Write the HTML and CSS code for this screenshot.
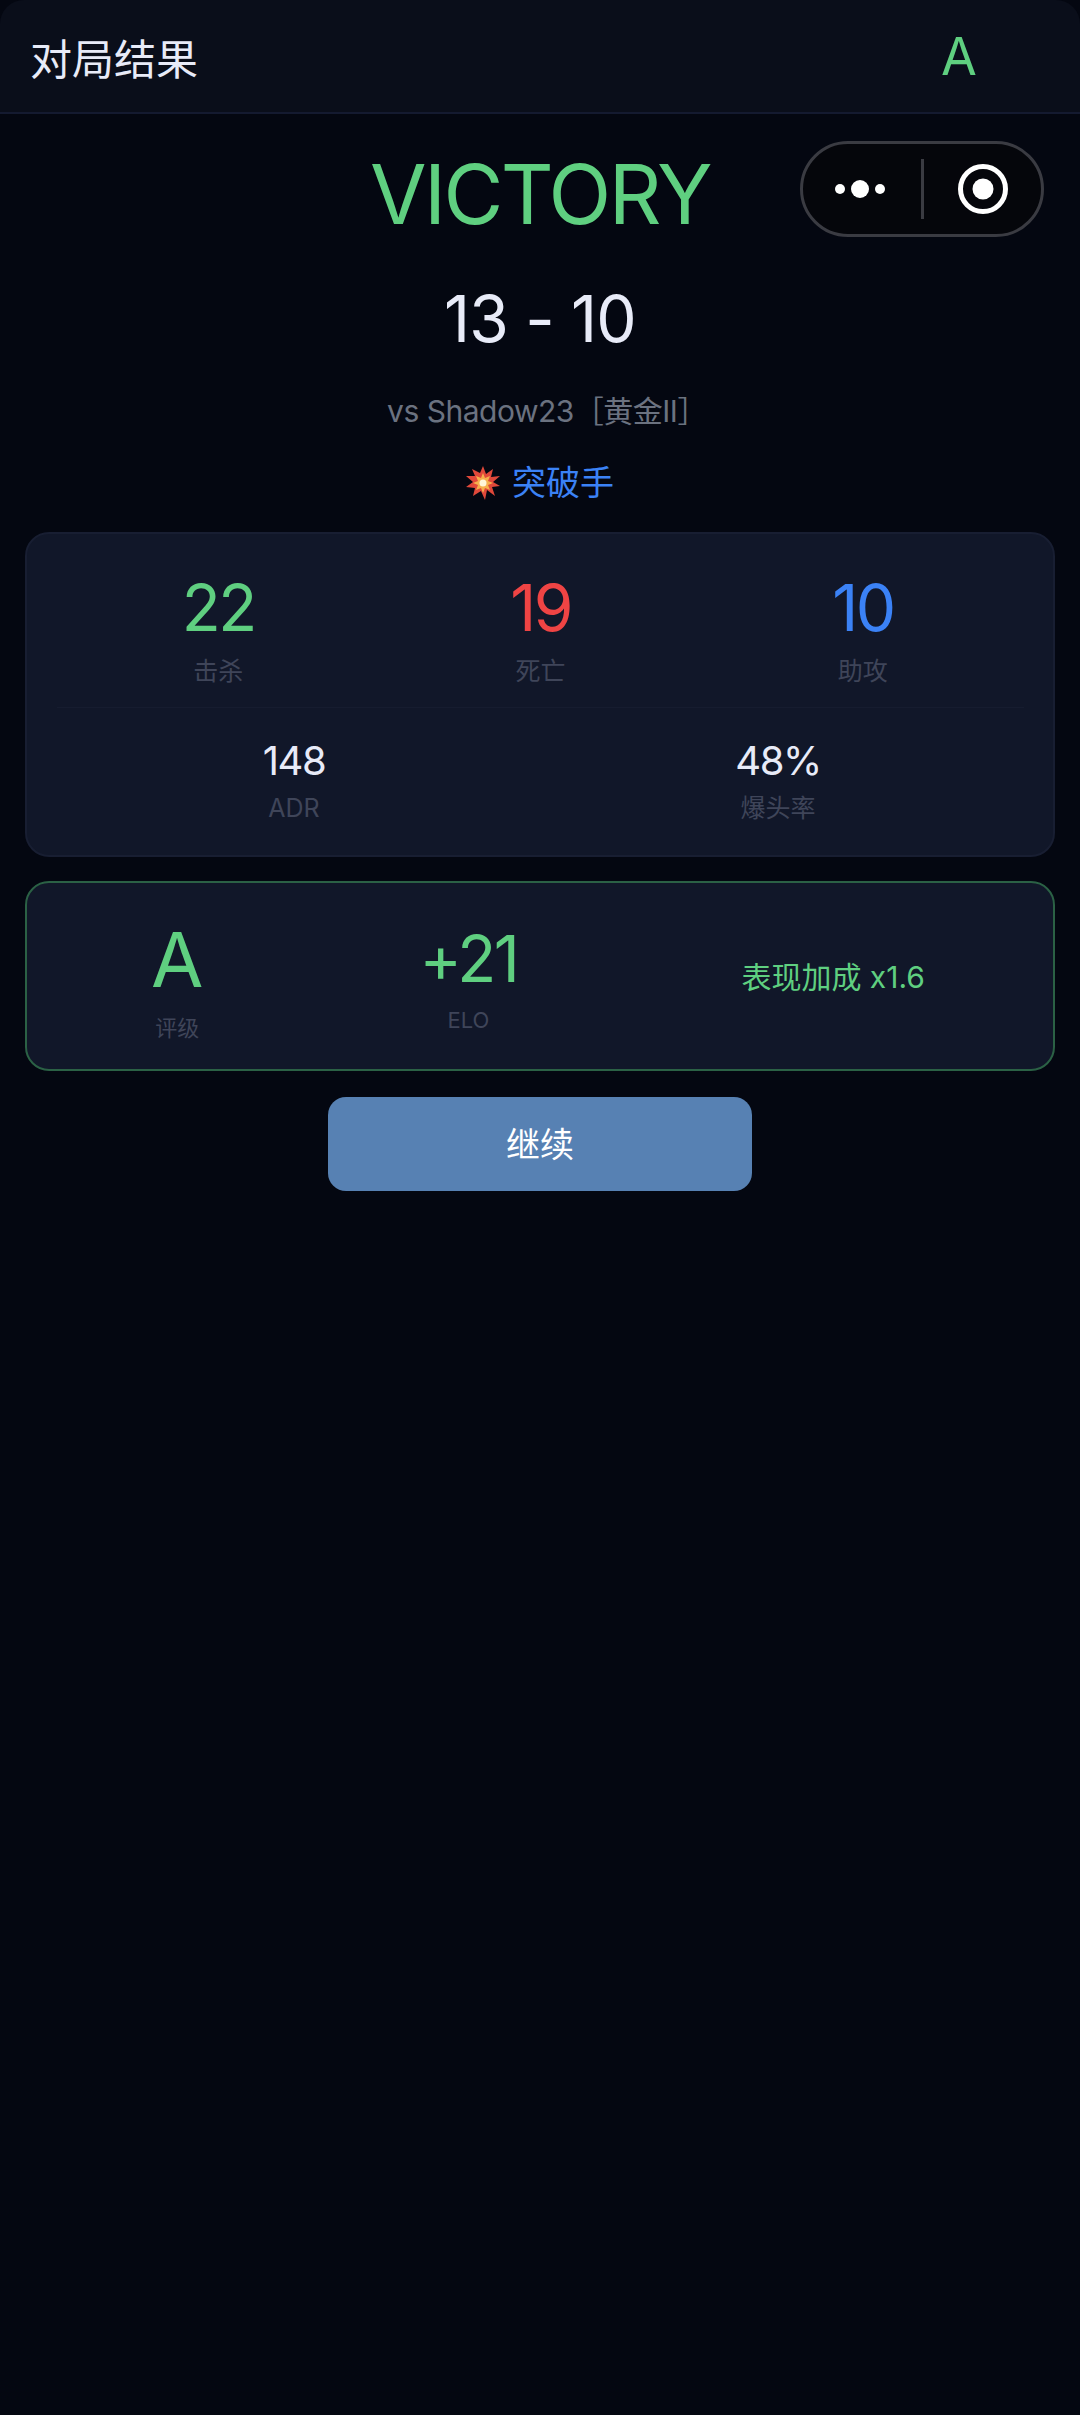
FILE: index.html
```html
<!DOCTYPE html>
<html lang="zh-CN">
<head>
  <meta charset="UTF-8">
  <title>对局结果</title>
  <link rel="stylesheet" href="styles.css">
</head>
<body>
  <div class="page">
    <header class="topbar">
      <span class="topbar-title">对局结果</span>
      <span class="topbar-grade">A</span>
    </header>

    <div class="capsule">
      <svg class="capsule-more" width="52" height="18" viewBox="0 0 52 18">
        <circle cx="6" cy="9" r="5" fill="#fff"/>
        <circle cx="26" cy="9" r="9" fill="#fff"/>
        <circle cx="46" cy="9" r="5" fill="#fff"/>
      </svg>
      <span class="capsule-line"></span>
      <svg class="capsule-close" width="50" height="50" viewBox="0 0 50 50">
        <circle cx="25" cy="25" r="22.5" fill="none" stroke="#fff" stroke-width="5"/>
        <circle cx="25" cy="25" r="10.5" fill="#fff"/>
      </svg>
    </div>

    <main class="content">
      <h1 class="result">VICTORY</h1>
      <div class="score">13 - 10</div>
      <div class="opponent">vs Shadow23［黄金II］</div>
      <div class="badge">
        <svg class="badge-icon" width="34" height="34" viewBox="0 0 34 34">
          <path d="M17 0l3 8 7-5-2 8 9-1-7 6 7 4-8 1 3 9-8-6-2 10-4-9-8 5 2-8-9-1 7-5-7-6 9 0-3-7 8 4z" fill="#e0483a"/>
          <path d="M17 7l2 5 5-2-2 5 5 2-5 2 2 5-5-2-2 5-2-5-5 2 2-5-5-2 5-2-2-5 5 2z" fill="#f6b04d"/>
          <circle cx="17" cy="17" r="3.5" fill="#fff6d8"/>
        </svg>
        <span>突破手</span>
      </div>

      <section class="card stats">
        <div class="stats-row">
          <div class="stat">
            <div class="stat-num green">22</div>
            <div class="stat-label">击杀</div>
          </div>
          <div class="stat">
            <div class="stat-num red">19</div>
            <div class="stat-label">死亡</div>
          </div>
          <div class="stat">
            <div class="stat-num blue">10</div>
            <div class="stat-label">助攻</div>
          </div>
        </div>
        <div class="stats-row stats-row-sub">
          <div class="stat">
            <div class="stat-small">148</div>
            <div class="stat-label">ADR</div>
          </div>
          <div class="stat">
            <div class="stat-small">48%</div>
            <div class="stat-label">爆头率</div>
          </div>
        </div>
      </section>

      <section class="card rating">
        <div class="stat">
          <div class="rating-grade green">A</div>
          <div class="rating-label">评级</div>
        </div>
        <div class="stat rating-elo-box">
          <div class="rating-elo green">+21</div>
          <div class="rating-label">ELO</div>
        </div>
        <div class="rating-bonus green">表现加成 x1.6</div>
      </section>

      <button class="next-btn">继续</button>
    </main>
  </div>
</body>
</html>
```

FILE: styles.css
```css
* {
  box-sizing: border-box;
}

body {
  margin: 0;
  background-color: #040711;
  font-family: Inter, "Noto Sans CJK SC", sans-serif;
  color: #e8ebf8;
}

.page {
  position: relative;
  min-height: 2415px;
}

.topbar {
  display: flex;
  justify-content: space-between;
  align-items: center;
  height: 114px;
  padding: 0 103px 0 30px;
  background-color: #0a0e1a;
  border-bottom: 2px solid #141a30;
  border-radius: 24px 24px 0 0;
}

.topbar-title {
  font-size: 42px;
}

.topbar-grade {
  font-size: 52px;
  font-weight: 370;
  color: #5fcf80;
}

.capsule {
  position: absolute;
  top: 141px;
  left: 800px;
  width: 244px;
  height: 96px;
  display: flex;
  align-items: center;
  background-color: #05060b;
  border: 3px solid #3a3b42;
  border-radius: 48px;
}

.capsule-more {
  margin-left: 31px;
}

.capsule-line {
  width: 3px;
  height: 60px;
  margin-left: 35px;
  background-color: #3a3b42;
}

.capsule-close {
  margin-left: 34px;
}

.content {
  display: flex;
  flex-direction: column;
  align-items: center;
  padding: 0 25px;
}

.result {
  margin: 27px 0 0;
  font-size: 82px;
  font-weight: 370;
  line-height: 108px;
  letter-spacing: -2.6px;
  color: #5fcf80;
}

.score {
  margin-top: 30px;
  font-size: 64px;
  font-weight: 370;
  line-height: 80px;
  letter-spacing: -0.8px;
}

.opponent {
  margin-top: 32px;
  padding-left: 14px;
  font-size: 30px;
  font-weight: 400;
  line-height: 40px;
  letter-spacing: -0.5px;
  color: #6b7280;
}

.badge {
  display: flex;
  align-items: center;
  gap: 12px;
  margin-top: 32px;
  font-size: 34px;
  line-height: 40px;
  color: #3b82f6;
}

.card {
  width: 100%;
  background-color: #111729;
  border: 2px solid #181e32;
  border-radius: 24px;
}

.stats {
  margin-top: 29px;
  height: 325px;
  padding: 0 29px 0 30px;
}

.stats-row {
  display: grid;
  grid-template-columns: repeat(3, 1fr);
  height: 174px;
  padding-top: 36px;
  border-bottom: 1px solid #161c2f;
}

.stats-row-sub {
  grid-template-columns: repeat(2, 1fr);
  height: auto;
  margin: 0 4px 0 -5px;
  padding: 31px 0 0;
  border-bottom: none;
}

.stat {
  display: flex;
  flex-direction: column;
  align-items: center;
}

.stat-num {
  font-size: 64px;
  font-weight: 370;
  line-height: 76px;
  letter-spacing: -2.5px;
}

.stat-small {
  font-size: 40px;
  font-weight: 370;
  line-height: 44px;
  letter-spacing: -1.5px;
  color: #e8ebf8;
}

.stat-label {
  margin-top: 7px;
  font-size: 25px;
  font-weight: 400;
  line-height: 36px;
  color: #3f4559;
}

.green {
  color: #5fcf80;
}

.red {
  color: #ef4444;
}

.blue {
  color: #3b82f6;
}

.rating {
  display: flex;
  justify-content: space-around;
  align-items: center;
  height: 190px;
  margin-top: 24px;
  padding: 4px 20px 0 16px;
  border-color: #2b6145;
}

.rating-elo-box {
  margin-right: 8px;
}

.rating-grade {
  font-size: 76px;
  font-weight: 370;
  line-height: 92px;
}

.rating-elo {
  font-size: 64px;
  font-weight: 370;
  line-height: 76px;
  letter-spacing: -2.5px;
}

.rating-label {
  margin-top: 8px;
  font-size: 22px;
  font-weight: 400;
  line-height: 30px;
  color: #3f4559;
}

.rating-bonus {
  padding-bottom: 6px;
  font-size: 30px;
  font-weight: 400;
}

.next-btn {
  width: 424px;
  height: 94px;
  margin-top: 26px;
  padding-bottom: 4px;
  border: none;
  border-radius: 18px;
  background-color: #5781b3;
  color: #fff;
  font-family: inherit;
  font-size: 34px;
}
```
